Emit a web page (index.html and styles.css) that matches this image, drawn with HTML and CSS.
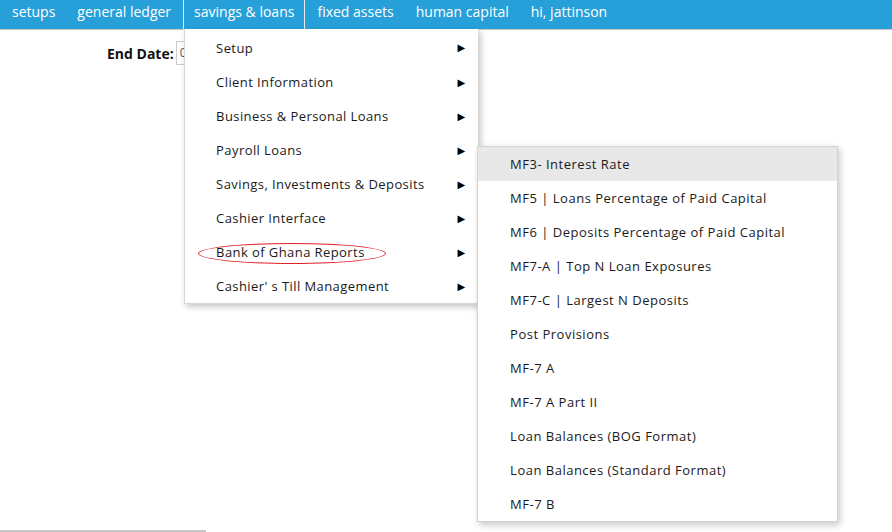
FILE: index.html
```html
<!DOCTYPE html>
<html>
<head>
<meta charset="utf-8">
<link rel="stylesheet" href="styles.css">
</head>
<body>
<nav class="topbar">
  <a class="nav-item">setups</a>
  <a class="nav-item">general ledger</a>
  <div class="nav-item active">savings &amp; loans
    <ul class="menu">
      <li class="menu-item">Setup<span class="arrow">&#9654;</span></li>
      <li class="menu-item">Client Information<span class="arrow">&#9654;</span></li>
      <li class="menu-item">Business &amp; Personal Loans<span class="arrow">&#9654;</span></li>
      <li class="menu-item">Payroll Loans<span class="arrow">&#9654;</span></li>
      <li class="menu-item">Savings, Investments &amp; Deposits<span class="arrow">&#9654;</span></li>
      <li class="menu-item">Cashier Interface<span class="arrow">&#9654;</span></li>
      <li class="menu-item open"><span class="circled">Bank of Ghana Reports</span><span class="arrow">&#9654;</span>
        <ul class="submenu">
          <li class="sub-item hover">MF3- Interest Rate</li>
          <li class="sub-item">MF5 | Loans Percentage of Paid Capital</li>
          <li class="sub-item">MF6 | Deposits Percentage of Paid Capital</li>
          <li class="sub-item">MF7-A | Top N Loan Exposures</li>
          <li class="sub-item">MF7-C | Largest N Deposits</li>
          <li class="sub-item">Post Provisions</li>
          <li class="sub-item">MF-7 A</li>
          <li class="sub-item">MF-7 A Part II</li>
          <li class="sub-item">Loan Balances (BOG Format)</li>
          <li class="sub-item">Loan Balances (Standard Format)</li>
          <li class="sub-item">MF-7 B</li>
        </ul>
      </li>
      <li class="menu-item">Cashier' s Till Management<span class="arrow">&#9654;</span></li>
    </ul>
  </div>
  <a class="nav-item">fixed assets</a>
  <a class="nav-item">human capital</a>
  <a class="nav-item">hi, jattinson</a>
</nav>
<main class="content">
  <div class="field">
    <label class="field-label">End Date:</label>
    <span class="field-input">0</span>
  </div>
</main>
<div class="bottom-line"></div>
</body>
</html>
```

FILE: styles.css
```css
* { box-sizing: border-box; }
html, body {
  margin: 0;
  padding: 0;
  width: 892px;
  height: 532px;
  overflow: hidden;
  background: #ffffff;
  font-family: "Open Sans", "DejaVu Sans", sans-serif;
  color: #111;
}
.topbar {
  display: flex;
  height: 30px;
  background: #279fd9;
  border-bottom: 1px solid #c8c8c8;
  padding-left: 1px;
  position: relative;
  z-index: 5;
}
.nav-item {
  color: #ffffff;
  font-size: 14px;
  line-height: 24px;
  padding: 0 11px;
  white-space: nowrap;
  position: relative;
}
.nav-item.active {
  border-left: 1px solid #e6eef3;
  border-right: 1px solid #e6eef3;
  padding: 0 10px;
  margin: 0 1px;
}
.menu {
  list-style: none;
  margin: 0;
  padding: 0;
  position: absolute;
  left: 0;
  top: 29px;
  width: 295px;
  background: #fff;
  border: 1px solid #d6d6d6;
  border-top: none;
  box-shadow: 2px 3px 6px rgba(0,0,0,0.22);
  color: #1a1a1a;
}
.menu-item {
  position: relative;
  height: 34px;
  display: flex;
  align-items: center;
  padding-left: 31px;
  font-size: 13px;
  letter-spacing: 0.42px;
  line-height: 34px;
}
.menu-item:first-child { height: 36px; padding-top: 2px; }
.arrow {
  position: absolute;
  right: 13px;
  top: 0;
  font-size: 10px;
  letter-spacing: 0;
  color: #000;
}
.menu-item:first-child .arrow { top: 1px; }
.circled {
  position: relative;
}
.circled::after {
  content: "";
  position: absolute;
  left: -18px;
  right: -21px;
  top: 8px;
  height: 19px;
  border: 1px solid #e0202a;
  border-radius: 50%;
}
.submenu {
  list-style: none;
  margin: 0;
  padding: 0;
  position: absolute;
  left: 292px;
  top: -89px;
  width: 361px;
  background: #fff;
  border: 1px solid #d3d3d3;
  box-shadow: 2px 3px 7px rgba(0,0,0,0.22);
}
.sub-item {
  height: 34px;
  line-height: 34px;
  padding-left: 32px;
  font-size: 13px;
  letter-spacing: 0.5px;
  white-space: nowrap;
}
.sub-item.hover { background: #e8e8e8; }
.content {
  padding: 11px 0 0 107px;
}
.field {
  display: flex;
  align-items: center;
  gap: 2px;
}
.field-label {
  font-weight: bold;
  font-size: 14px;
  color: #111;
}
.field-input {
  display: inline-block;
  width: 60px;
  height: 24px;
  border: 1px solid #ccc;
  font-size: 12px;
  padding-left: 3px;
  line-height: 22px;
  color: #555;
}
.bottom-line {
  position: absolute;
  left: 0;
  top: 530px;
  width: 206px;
  height: 2px;
  background: #c8c8c8;
}
```
